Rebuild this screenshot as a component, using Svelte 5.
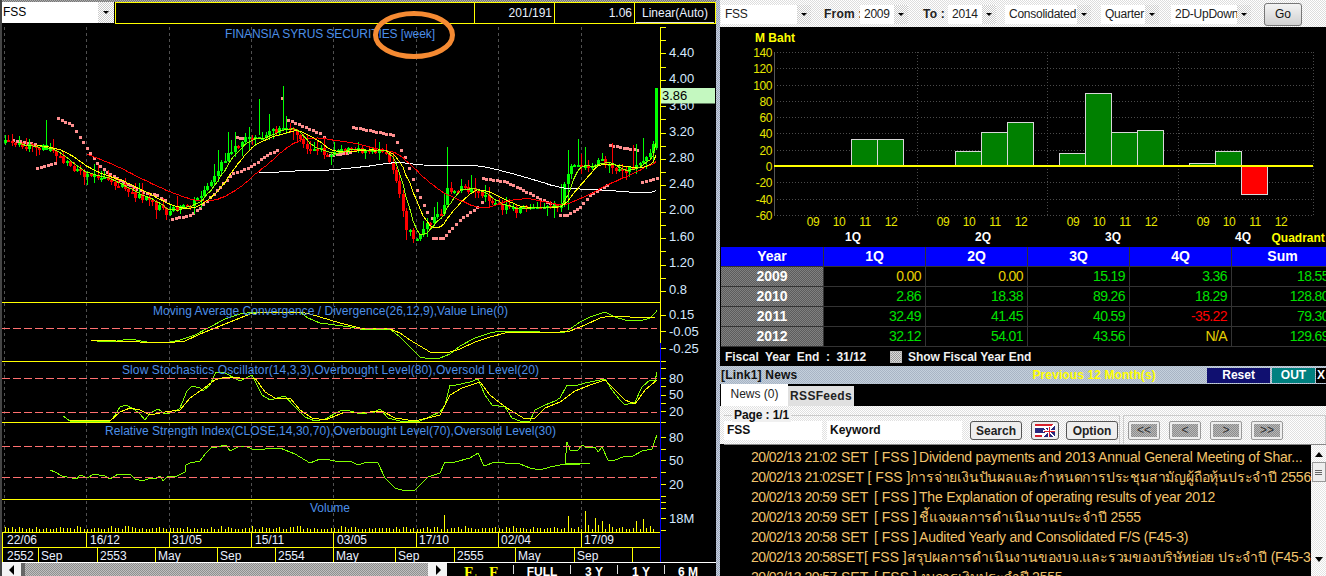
<script>
  const pts = (s) => s.trim().split(/\s+/).map((p) => p.split(',').map(Number));
  const str = (a) => a.map((p) => p.join(',')).join(' ');

  const path = pts(`5,143 30,147 50,148 60,160 80,172 100,178 125,188 145,200 165,212 180,207 190,205 200,195 210,180 225,158 232,150 245,140 265,135 283,128 295,133 310,150 330,153 360,150 385,152 392,165 400,200 405,225 412,237 420,235 430,222 440,215 448,190 460,188 478,190 490,200 510,210 530,208 560,205 565,180 572,165 585,165 600,160 610,165 625,175 640,160 650,152 654,145`);
  const at = (x) => {
    for (let i = 1; i < path.length; i++) {
      if (x <= path[i][0]) {
        const [a, b] = path[i - 1], [c, d] = path[i];
        return b + ((d - b) * (x - a)) / (c - a);
      }
    }
    return path[path.length - 1][1];
  };

  let seed = 4217;
  const rnd = () => ((seed = (seed * 16807) % 2147483647) / 2147483647);

  const STEP = 3.43;
  const candles = [];
  let prev = at(5);
  for (let i = 0; i < 190; i++) {
    const x = 5 + i * STEP;
    const close = at(x) + (rnd() - 0.5) * 7;
    const top = Math.min(prev, close), bot = Math.max(prev, close);
    const r = rnd(), q = rnd();
    const rising = x > 215 && x < 290 || x > 560;
    candles.push({
      x: Math.round(x), close,
      top, h: Math.max(bot - top, 2),
      hi: top - r * r * r * (rising ? 26 : 12) - 1,
      lo: bot + q * q * q * 9 + 1,
      up: close < prev
    });
    prev = close;
  }
  for (const [x, hi, lo, up] of [[45,120,146,1],[282,86,128,1],[258,99,135,1],[250,127,150,1],[270,114,140,1],[449,128,190,0],[448,147,198,1],[567,150,210,1]]) {
    const c = candles.reduce((m, k) => (Math.abs(k.x - x) < Math.abs(m.x - x) ? k : m));
    c.hi = hi; c.lo = lo; c.up = !!up;
  }
  candles.push({ x: 656, close: 100, top: 88, h: 60, hi: 88, lo: 150, up: true });

  const sma = (n) => {
    const out = [];
    for (let i = n - 1; i < candles.length; i++) {
      let s = 0;
      for (let j = i - n + 1; j <= i; j++) s += candles[j].close;
      out.push(`${candles[i].x},${(s / n).toFixed(1)}`);
    }
    return out.join(' ');
  };
  const ma5 = sma(5), ma10 = sma(10), ma25 = sma(25), ma75 = sma(75);

  const sarSegs = [
    '13,140 35,144',
    '37,168 55,163',
    '58,118 72,125 80,137 90,153 97,163 107,172 120,180 133,187 143,192 157,195 165,200',
    '172,219 190,215 200,208 217,190 233,173 248,168 267,155 277,150',
    '237,137 243,138',
    '288,120 320,133 324,137',
    '330,155 350,152',
    '353,127 393,135 405,157 417,190 427,212 432,218',
    '433,238 443,238 452,228 460,220 477,207 482,202',
    '483,178 507,182 523,190 547,202 557,205',
    '560,215 567,215 580,207 590,195 607,185',
    '610,145 637,150',
    '642,182 657,178'
  ];
  const sar = [];
  for (const s of sarSegs) {
    const p = pts(s);
    for (let k = 1; k < p.length; k++) {
      const [a, b] = p[k - 1], [c, d] = p[k];
      const n = Math.max(1, Math.round((c - a) / STEP));
      for (let j = 0; j < n; j++) sar.push([Math.round(a + ((c - a) * j) / n), Math.round(b + ((d - b) * j) / n)]);
    }
    sar.push(p[p.length - 1]);
  }
  sar.push([282, 98]);

  const macdG = '91,340 97,341 117,341 130,339 147,342 165,343 180,340 195,335 210,327 225,319 240,314 255,312 275,312 300,312 308,318 320,323 335,325 350,327 360,329 390,329 400,337 410,347 420,357 430,359 440,358 450,354 460,346 475,338 490,333 500,331 515,331 530,331 550,333 565,332 570,329 580,322 590,317 605,312 615,317 625,320 640,321 650,318 656,312 657,310';
  const macdY = '91,340 165,343 185,341 200,334 215,328 230,322 250,314 265,312 300,312 310,314 340,323 360,328 390,329 400,333 410,340 420,346 430,352 440,353 450,352 460,349 475,342 490,337 505,333 525,332 560,332 570,331 585,325 600,318 610,316 630,317 655,318';
  const stoG = '63,416 70,421 85,421 110,421 113,418 120,407 126,405 135,410 140,414 145,420 150,413 158,409 165,414 175,412 180,408 187,391 192,386 200,388 203,391 210,385 216,372 225,373 240,381 252,375 262,395 270,400 285,396 293,405 305,417 315,421 325,419 340,411 347,410 360,414 375,412 380,409 388,418 400,421 420,421 440,412 445,405 450,385 456,385 470,382 478,379 485,395 492,405 505,407 512,418 520,421 530,421 535,410 545,405 555,401 560,398 567,385 575,386 585,383 600,380 605,379 612,390 620,400 625,405 635,402 642,387 650,380 655,381 657,372';
  const stoY = '70,420 90,420 110,421 120,412 130,408 140,410 150,415 165,412 180,410 190,398 200,391 215,380 225,377 240,378 255,378 265,392 275,398 290,398 300,410 312,418 325,420 345,412 370,412 382,411 395,418 415,421 440,415 450,395 462,388 480,382 490,395 500,403 510,410 525,419 535,418 545,408 560,402 575,391 590,385 605,380 615,390 625,400 635,404 645,390 657,380';
  const rsi = '50,470 55,472 62,476 72,478 77,479 80,475 88,478 93,474 105,476 110,479 118,474 130,474 135,479 143,481 150,478 155,479 160,476 163,481 168,476 175,477 185,472 186,465 190,463 200,461 205,454 212,447 217,447 226,445 230,451 240,446 247,447 255,450 265,449 280,448 295,454 310,463 320,459 330,460 340,462 350,461 358,465 367,462 378,463 385,478 395,488 405,491 415,490 428,477 440,473 445,462 455,462 470,458 478,453 484,466 495,462 505,463 520,464 530,468 540,470 550,467 560,465 580,464 590,463 595,460 602,462 607,442 570,0'.replace(' 595,460 602,462 607,442 570,0', '') + ' 565,464 567,442 570,450 578,450 582,445 587,448 595,447 598,452 602,447 608,460 615,460 623,457 633,456 642,451 652,449 655,440 657,435';

  const bigVol = { 443: 515, 567: 516, 584: 511, 587: 525, 594: 518, 598: 525, 601: 521, 608: 524, 636: 521, 642: 519, 650: 526, 656: 502 };
  const volumes = Array.from({ length: 190 }, (_, i) => {
    const x = Math.round(5 + i * STEP);
    const k = Object.keys(bigVol).find((b) => Math.abs(b - x) < 2);
    return { x, y: k ? bigVol[k] : 531 - 2 - Math.round(rnd() * rnd() * 4) };
  });

  const verticals = [4, 86, 169, 251, 333, 416, 498, 581];
  const bandTops = [302, 361, 422, 499];
  const levels = [328, 378, 412, 446, 477];
  const axisTicks = [];
  for (let y = 27; y <= 302; y += 13.2) axisTicks.push(Math.round(y));
  axisTicks.push(315, 331, 348, 361, 368, 378, 386, 395, 403, 411, 422, 437, 449, 460, 472, 484, 496, 502, 508, 518, 530);
  const priceLabels = [['4.40',52],['4.00',78],['3.60',105],['3.20',131],['2.80',157],['2.40',183],['2.00',209],['1.60',236],['1.20',262],['0.8',289],['0.15',314],['-0.05',331],['-0.25',348],['80',378],['50',394],['20',411],['80',437],['50',460],['20',484],['18M',518]];
  const row1 = [['22/06',7],['16/12',90],['31/05',172],['15/11',255],['03/05',337],['17/10',419],['02/04',501],['17/09',584]];
  const row1Sep = [86, 169, 251, 333, 416, 498, 581];
  const row2 = [['2552',7],['Sep',41],['2553',100],['May',158],['Sep',220],['2554',278],['May',336],['Sep',398],['2555',457],['May',518],['Sep',577]];
  const row2Sep = [38, 97, 155, 217, 275, 333, 395, 454, 515, 574, 632];

  const V = (v) => 166 - v * 0.8143;
  const bars = [
    [851.4, 32.49],[877.5, 32.12],[955.3, 18.38],[981.4, 41.45],[1007.4, 54.01],
    [1059.6, 15.19],[1085.6, 89.26],[1111.7, 40.59],[1137.8, 43.56],
    [1189.5, 3.36],[1215.6, 18.29],[1241.7, -35.22]
  ];
  const yVals = [140,120,100,80,60,40,20,0,-20,-40,-60];
  const xGroups = [813, 943, 1073, 1203];
  const qLabels = [['1Q',853],['2Q',983],['3Q',1113],['4Q',1243]];

  const tableRows = [
    ['2009',['0.00','z'],['0.00','z'],['15.19','g'],['3.36','g'],['18.55','g']],
    ['2010',['2.86','g'],['18.38','g'],['89.26','g'],['18.29','g'],['128.80','g']],
    ['2011',['32.49','g'],['41.45','g'],['40.59','g'],['-35.22','r'],['79.30','g']],
    ['2012',['32.12','g'],['54.01','g'],['43.56','g'],['N/A','z'],['129.69','g']]
  ];
  const news = [
    ['20/02/13 21:02','Dividend payments and 2013 Annual General Meeting of Shar...'],
    ['20/02/13 21:02','การจ่ายเงินปันผลและกำหนดการประชุมสามัญผู้ถือหุ้นประจำปี 2556'],
    ['20/02/13 20:59','The Explanation of operating results of year 2012'],
    ['20/02/13 20:59','ชี้แจงผลการดำเนินงานประจำปี 2555'],
    ['20/02/13 20:58','Audited Yearly and Consolidated F/S (F45-3)'],
    ['20/02/13 20:58','สรุปผลการดำเนินงานของบจ.และรวมของบริษัทย่อย ประจำปี (F45-3)'],
    ['20/02/13 20:57','งบการเงินประจำปี 2555']
  ];
</script>

<div class="screen">
  <section class="left">
    <header class="topbar">
      <div class="symbol"><span class="symtext">FSS</span><span class="drop big"><i></i></span></div>
      <div class="infobox">
        <div class="info grow"></div>
        <div class="info num">201/191</div>
        <div class="info num">1.06</div>
        <div class="info scale"><span>Linear(Auto)</span></div>
      </div>
    </header>

    <svg class="chart" viewBox="0 24 716 539" width="716" height="539">
      <g stroke="#505050" stroke-dasharray="3 3" shape-rendering="crispEdges">
        {#each verticals as x}<line x1={x + .5} x2={x + .5} y1="27" y2="532" />{/each}
      </g>

      {#each sar as [x, y]}<rect x={x - 1} y={y - 1} width="3" height="3" fill="#ff8f8f" />{/each}

      <g shape-rendering="crispEdges">
        {#each candles as c}
          <line x1={c.x + .5} x2={c.x + .5} y1={c.hi} y2={c.lo} stroke={c.up ? '#00ff00' : '#ff0000'} />
          <rect x={c.x - 1} y={c.top} width="3" height={c.h} fill={c.up ? '#00ff00' : '#ff0000'} />
        {/each}
      </g>

      <g fill="none" shape-rendering="crispEdges">
        <polyline points={ma75} stroke="#ffffff" />
        <polyline points={ma25} stroke="#ff0000" />
        <polyline points={ma10} stroke="#ffff00" />
        <polyline points={ma5} stroke="#99ff00" />
        <polyline points={macdG} stroke="#80ff00" />
        <polyline points={macdY} stroke="#ffff00" />
        <polyline points={stoG} stroke="#80ff00" />
        <polyline points={stoY} stroke="#ffff00" />
        <polyline points={rsi} stroke="#80ff00" />
      </g>

      <g stroke="#ff7070" stroke-dasharray="8 3" shape-rendering="crispEdges">
        {#each levels as y}<line x1="2" x2="657" y1={y + .5} y2={y + .5} />{/each}
      </g>

      <g stroke="#ffff00" shape-rendering="crispEdges">
        {#each volumes as v}<line x1={v.x + .5} x2={v.x + .5} y1={v.y} y2="532" />{/each}
        {#each bandTops as y}<line x1="2" x2="660" y1={y + .5} y2={y + .5} />{/each}
        <line x1="2" x2="660" y1="532.5" y2="532.5" />
        <line x1="2" x2="660" y1="547.5" y2="547.5" />
        <line x1="2.5" x2="2.5" y1="532" y2="562" />
        {#each row1Sep as x}<line x1={x + .5} x2={x + .5} y1="532" y2="547" />{/each}
        {#each row2Sep as x}<line x1={x + .5} x2={x + .5} y1="547" y2="562" />{/each}
        {#each axisTicks as y}<line x1="661" x2="666" y1={y + .5} y2={y + .5} />{/each}
        <line x1="660.5" x2="660.5" y1="27" y2="343" />
      </g>
      <line x1="660.5" x2="660.5" y1="343" y2="562" stroke="#0000ff" stroke-width="1" shape-rendering="crispEdges" />
      <line x1="0" x2="716" y1="562.5" y2="562.5" stroke="#ffffff" shape-rendering="crispEdges" />

      <g class="ctitle">
        <text x="225" y="38" textLength="210">FINANSIA SYRUS SECURITIES [week]</text>
        <text x="153" y="315" textLength="355">Moving Average Convergence / Divergence(26,12,9),Value Line(0)</text>
        <text x="122" y="374" textLength="417">Slow Stochastics Oscillator(14,3,3),Overbought Level(80),Oversold Level(20)</text>
        <text x="105" y="435" textLength="451">Relative Strength Index(CLOSE,14,30,70),Overbought Level(70),Oversold Level(30)</text>
        <text x="310" y="512" textLength="40">Volume</text>
      </g>

      <g class="plabel">
        {#each priceLabels as [t, y]}<text x="669" y={y + 5}>{t}</text>{/each}
      </g>
      <rect x="661" y="88" width="54" height="15.5" fill="#c4f8c0" />
      <text x="662" y="100" class="tag">3.86</text>

      <g class="tlabel">
        {#each row1 as [t, x]}<text {x} y="544">{t}</text>{/each}
        {#each row2 as [t, x]}<text {x} y="560">{t}</text>{/each}
      </g>
    </svg>

    <footer class="scrollrow">
      <div class="sbtn"><svg width="8" height="10" viewBox="0 0 8 10"><path d="M6 0 1 5l5 5z" fill="#000"/></svg></div>
      <div class="thumb"></div>
      <div class="track"></div>
      <div class="sbtn"><svg width="8" height="10" viewBox="0 0 8 10"><path d="M2 0l5 5-5 5z" fill="#000"/></svg></div>
      <div class="tools">
        <span class="fb">F<sub>+</sub></span>
        <span class="fb">F<sub>-</sub></span>
        <span class="tool first">FULL</span>
        <span class="tool">3 Y</span>
        <span class="tool">1 Y</span>
        <span class="tool">6 M</span>
      </div>
    </footer>

    <svg class="ring" width="90" height="56" viewBox="0 0 90 56"><ellipse cx="45" cy="28" rx="38.5" ry="21.5" fill="none" stroke="#f58a32" stroke-width="5"/></svg>
  </section>

  <section class="right">
    <nav class="tb">
      <div class="sel w-sym"><span>FSS</span><span class="drop"><i></i></span></div>
      <b class="lab first">From :</b>
      <div class="sel w-year"><span>2009</span><span class="drop"><i></i></span></div>
      <b class="lab second">To :</b>
      <div class="sel w-year"><span>2014</span><span class="drop"><i></i></span></div>
      <div class="sel w-cons"><span>Consolidated</span><span class="drop"><i></i></span></div>
      <div class="sel w-quar"><span>Quarter</span><span class="drop"><i></i></span></div>
      <div class="sel w-2d"><span>2D-UpDown</span><span class="drop"><i></i></span></div>
      <button class="go">Go</button>
    </nav>

    <svg class="bars" viewBox="720 27 606 220" width="606" height="220">
      <text x="755" y="42" class="mbaht">M Baht</text>
      <g stroke="#4a4a4a" stroke-dasharray="1 2" shape-rendering="crispEdges">
        {#each yVals as v}<line x1="774" x2="1313" y1={Math.round(V(v)) + .5} y2={Math.round(V(v)) + .5} />{/each}
        {#each [774, 917.5, 1047.5, 1178, 1313] as x}<line x1={x} x2={x} y1="52" y2="216" />{/each}
      </g>
      <line x1="774.5" x2="774.5" y1="52" y2="216" stroke="#555" shape-rendering="crispEdges" />
      {#each yVals as v}<text x="772" y={V(v) + 5} class="yt" text-anchor="end">{v}</text>{/each}
      <g shape-rendering="crispEdges" stroke="#d8d8d8">
        {#each bars as [x, v]}
          <rect {x} y={v > 0 ? V(v) : 166} width="26" height={Math.abs(v) * 0.8143} fill={v > 0 ? '#008000' : '#ff0000'} />
        {/each}
      </g>
      <rect x="774" y="165" width="539" height="2" fill="#ffff00" />
      {#each xGroups as g}
        {#each ['09','10','11','12'] as t, i}<text x={g + i * 26} y="226" class="yt" text-anchor="middle">{t}</text>{/each}
      {/each}
      {#each qLabels as [t, x]}<text {x} y="241" class="q" text-anchor="middle">{t}</text>{/each}
      <text x="1271.5" y="242" class="quad">Quadrant</text>
    </svg>

    <div class="table">
      <div class="th">Year</div><div class="th">1Q</div><div class="th">2Q</div><div class="th">3Q</div><div class="th">4Q</div><div class="th">Sum</div>
      {#each tableRows as [y, ...cells]}
        <div class="yr">{y}</div>
        {#each cells as [t, c]}<div class="td {c}">{t}</div>{/each}
      {/each}
    </div>

    <div class="fiscal">
      <span class="fy">Fiscal&nbsp; Year&nbsp; End&nbsp; :&nbsp; 31/12</span>
      <span class="check"></span>
      <span class="show">Show Fiscal Year End</span>
    </div>

    <div class="newshead">
      <b class="link">[Link1] News</b>
      <b class="prev">Previous 12 Month(s)</b>
      <span class="hbtn reset">Reset</span>
      <span class="hbtn out">OUT</span>
      <span class="hbtn x">X</span>
    </div>

    <div class="tabs">
      <span class="tab on">News (0)</span>
      <span class="tab">RSSFeeds</span>
    </div>

    <div class="filters">
      <div class="group one">
        <span class="legend">Page : 1/1</span>
        <span class="inp w1">FSS</span>
        <span class="inp w2">Keyword</span>
        <button class="btn b1">Search</button>
        <button class="btn flag" aria-label="Language">
          <svg width="20" height="13" viewBox="0 0 20 13" shape-rendering="crispEdges">
            <rect width="20" height="13" fill="#d8202c"/><rect y="2" width="20" height="9" fill="#fff"/><rect y="4" width="20" height="5" fill="#28287c"/>
            <path d="M20 0v13H6z" fill="#28287c"/><path d="M20 0 7 13M8 3l12 10M14 3v10M8 7h12" stroke="#fff" stroke-width="1.5" fill="none"/><path d="M14 3v10M9 7h11" stroke="#d8202c" fill="none"/>
          </svg>
        </button>
        <button class="btn b2">Option</button>
      </div>
      <div class="group two">
        <button class="nav"><span>&lt;&lt;</span></button>
        <button class="nav"><span>&lt;</span></button>
        <button class="nav"><span>&gt;</span></button>
        <button class="nav"><span>&gt;&gt;</span></button>
      </div>
    </div>

    <div class="newslist">
      <div class="items">
        {#each news as [d, t]}
          <div class="item"><span class="d">{d}</span><span class="s">SET</span><span class="f">[ FSS ]</span><span class="t">{t}</span></div>
        {/each}
      </div>
      <div class="vscroll">
        <svg width="8" height="5" viewBox="0 0 8 5"><path d="M4 0l4 5H0z" fill="#000"/></svg>
        <div class="vthumb"><i></i><i></i><i></i></div>
        <svg class="dn" width="8" height="5" viewBox="0 0 8 5"><path d="M0 0h8L4 5z" fill="#000"/></svg>
      </div>
    </div>
  </section>
</div>

<style>
  :global(body) { margin: 0; background: #000; overflow: hidden; }
  .screen { position: relative; display: flex; width: 1326px; height: 576px; overflow: hidden; background: #000; font-family: "Liberation Sans", Arial, sans-serif; }
  .left { position: relative; flex: 0 0 716px; height: 576px; overflow: hidden; }
  .right { flex: 0 0 606px; margin-left: 4px; height: 576px; overflow: hidden; display: flex; flex-direction: column; position: relative; }
  .screen::before { content: ""; position: absolute; left: 716px; top: 0; width: 4px; height: 576px; background: conic-gradient(#c8d0e0 25%, #98a4b8 0 50%, #c8d0e0 0 75%, #98a4b8 0) 0 0 / 2px 2px; }
  .left::before { content: ""; position: absolute; left: 0; top: 0; width: 2px; height: 576px; background: #444; }

  .topbar { display: flex; height: 24px; padding-top: 2px; box-sizing: border-box; background: conic-gradient(#777 25%, #aaa 0 50%, #777 0 75%, #aaa 0) 0 0 / 2px 2px; background-size: 2px 2px; background-repeat: repeat-x; }
  .symbol { display: flex; flex: 0 0 113px; margin-left: 1px; height: 21px; background: #fff; }
  .symtext { flex: 1; font-size: 12px; color: #000; padding-left: 2px; line-height: 21px; }
  .infobox { display: flex; flex: 1; margin-left: 1px; height: 22px; box-sizing: border-box; border: 1px solid #ffff00; background: #000; }
  .info { color: #e8f0ff; font-size: 12px; line-height: 20px; box-sizing: border-box; border-right: 1px solid #ffff00; width: 80px; text-align: right; padding-right: 2px; }
  .info.grow { flex: 1; width: auto; }
  .info.scale { border-right: 0; text-align: center; padding: 0; }
  .info.scale span { display: block; height: 19px; border-bottom: 1px solid #ddd; margin: 0 1px; }

  .drop { display: flex; align-items: center; justify-content: center; flex: 0 0 14px; background: conic-gradient(#fff 25%, #ccc 0 50%, #fff 0 75%, #ccc 0) 0 0 / 2px 2px; }
  .drop.big { flex-basis: 16px; }
  .drop i { width: 0; height: 0; border: 3px solid transparent; border-top: 3px solid #000; border-bottom: 0; }

  .chart { display: block; }
  .ctitle text { fill: #4c8fe8; font-size: 12px; }
  .plabel text { fill: #d4e8ff; font-size: 13px; }
  .tlabel text { fill: #e8f0ff; font-size: 12px; }
  .tag { fill: #000; font-size: 13px; }

  .scrollrow { display: flex; height: 13px; align-items: stretch; }
  .sbtn { flex: 0 0 19px; margin-left: 2px; background: #f4f4f4; display: flex; align-items: center; justify-content: center; }
  .thumb { flex: 0 0 4px; background: #666; }
  .track { flex: 0 0 403px; background: conic-gradient(#c0c0c0 25%, #909090 0 50%, #c0c0c0 0 75%, #909090 0) 0 0 / 2px 2px; }
  .track + .sbtn { margin-left: 0; }
  .tools { flex: 1; display: flex; align-items: flex-start; position: relative; padding-left: 6px; color: #fff; font-size: 12px; font-weight: 700; line-height: 14px; padding-top: 2px; background: #000; white-space: nowrap; }
  .fb { color: #ffff00; font-family: "Liberation Serif", serif; font-size: 15px; margin-left: 11px; width: 14px; }
  .fb sub { font-size: 9px; vertical-align: -2px; }
  .fb + .fb { margin-left: 11px; }
  .tool { box-sizing: border-box; margin-left: 0; width: 47px; text-align: center; border-left: 1px solid #ddd; height: 9px; line-height: 15px; }
  .tool.first { margin-left: 10px; width: 57px; }
  .tool:nth-child(4) { width: 47px; }

  .ring { position: absolute; left: 369px; top: 7px; }

  .tb { flex: 0 0 27px; display: flex; align-items: center; box-sizing: border-box; padding-top: 1px; background: conic-gradient(#fff 25%, #ddd 0 50%, #fff 0 75%, #ddd 0) 0 0 / 2px 2px; font-size: 12px; color: #222; }
  .sel { display: flex; height: 19px; line-height: 19px; }
  .sel span:first-child { background: #fff; box-sizing: border-box; padding-left: 4px; overflow: hidden; white-space: nowrap; letter-spacing: -.25px; flex: 1; }
  .sel .drop { flex: 0 0 14px; }
  .w-sym { width: 90px; margin-left: 1px; }
  .w-year { width: 48px; }
  .w-cons { width: 86px; margin-left: 9px; }
  .w-quar { width: 58px; margin-left: 10px; }
  .w-2d { width: 80px; margin-left: 12px; }
  .lab { color: #222; font-size: 12px; white-space: nowrap; letter-spacing: .2px; }
  .lab.first { margin-left: 13px; width: 36px; }
  .lab.second { margin-left: 15px; width: 25px; }
  .go { margin: 0 0 0 13px; padding: 0; width: 38px; height: 23px; box-sizing: border-box; border: 1px solid #777; border-radius: 3px; background: linear-gradient(#f4f4f4, #d0d0d0); font: 12px "Liberation Sans", Arial, sans-serif; color: #111; }

  .bars { display: block; flex: 0 0 220px; }
  .mbaht { fill: #ffff00; font-size: 12px; font-weight: 700; }
  .yt { fill: #e6e600; font-size: 12px; letter-spacing: -.4px; }
  .q { fill: #fff; font-size: 12px; font-weight: 700; }
  .quad { fill: #ffff00; font-size: 12px; font-weight: 700; }

  .table { flex: 0 0 100px; margin-left: 1px; width: 612px; display: grid; grid-template-columns: 103px repeat(5, 102px); grid-auto-rows: 20px; background: #000; }
  .table > div { box-sizing: border-box; border-right: 1px solid #333; border-bottom: 1px solid #333; line-height: 19px; font-size: 14px; }
  .th { background: #0000ff; color: #fff; font-weight: 700; text-align: center; }
  .yr { color: #fff; font-weight: 700; text-align: center; background: conic-gradient(#5c5c5c 25%, #808080 0 50%, #5c5c5c 0 75%, #808080 0) 0 0 / 2px 2px; }
  .td { text-align: right; padding-right: 4px; letter-spacing: -.6px; }
  .td.g { color: #00e000; }
  .td.z { color: #e8d000; }
  .td.r { color: #ff0000; }

  .fiscal { flex: 0 0 19px; display: flex; align-items: center; color: #f0f0f0; font-size: 12px; background: #000; }
  .fy { margin-left: 5px; width: 165px; font-weight: 700; letter-spacing: -.05px; }
  .check { width: 12px; height: 12px; box-sizing: border-box; border: 1px solid #bbb; background: conic-gradient(#999 25%, #ddd 0 50%, #999 0 75%, #ddd 0) 0 0 / 2px 2px; }
  .show { margin-left: 6px; font-weight: 700; letter-spacing: -.02px; }

  .newshead { flex: 0 0 18px; display: flex; align-items: center; box-sizing: border-box; background: conic-gradient(#c4d0dc 25%, #a8b4c4 0 50%, #c4d0dc 0 75%, #a8b4c4 0) 0 0 / 2px 2px; font-size: 12px; }
  .link { margin-left: 1px; width: 312px; color: #111; letter-spacing: .2px; }
  .prev { color: #ffff00; width: 175px; letter-spacing: .1px; }
  .hbtn { height: 15px; line-height: 15px; text-align: center; font-weight: 700; color: #fff; }
  .reset { width: 63px; background: #101070; }
  .out { width: 43px; margin-left: 2px; background: #008080; }
  .x { width: 9px; margin-left: 1px; background: #000; text-align: left; padding-left: 1px; }

  .tabs { flex: 0 0 22px; display: flex; align-items: flex-end; background: #000; font-size: 12px; }
  .tab { box-sizing: border-box; width: 66px; height: 20px; line-height: 20px; text-align: center; background: #e0e0e0; color: #222; font-weight: 700; letter-spacing: .3px; }
  .tab.on { width: 67px; height: 22px; margin-left: 1px; background: #fff; font-weight: 400; letter-spacing: 0; line-height: 21px; }

  .filters { flex: 0 0 38px; display: flex; align-items: flex-start; box-sizing: border-box; padding: 9px 0 0 4px; background: conic-gradient(#fff 25%, #e0e0e0 0 50%, #fff 0 75%, #e0e0e0 0) 0 0 / 2px 2px; }
  .group { display: flex; box-sizing: border-box; height: 29px; position: relative; align-items: flex-start; padding-top: 6px; border: 1px solid #ccc; border-bottom: 0; }
  .group.one { width: 402px; gap: 0; border-left: 0; padding-top: 5px; }
  .group.two { width: 206px; margin-left: 3px; padding-left: 4px; padding-top: 5px; gap: 9px; }
  .legend { position: absolute; left: 8px; top: -7px; padding: 0 2px; font-size: 12px; color: #111; background: #f0f0f0; line-height: 13px; font-weight: 700; letter-spacing: -.1px; }
  .inp { display: block; box-sizing: border-box; height: 19px; line-height: 19px; background: #fff; font-size: 12px; font-weight: 700; color: #111; padding-left: 3px; }
  .w1 { width: 98px; }
  .w2 { width: 135px; margin-left: 5px; padding-left: 3px; }
  .btn { box-sizing: border-box; height: 19px; margin: 0; padding: 0; border: 1px solid #555; border-radius: 3px; background: #eee; font: 700 12px "Liberation Sans", Arial, sans-serif; color: #222; }
  .b1 { width: 52px; margin-left: 8px; }
  .flag { width: 28px; margin-left: 9px; display: flex; align-items: center; justify-content: center; }
  .b2 { width: 52px; margin-left: 7px; }
  .nav { box-sizing: border-box; width: 32px; height: 19px; margin: 0; padding: 2px; border: 1px solid #999; border-radius: 2px; background: #eee; font: 12px "Liberation Sans", Arial, sans-serif; color: #333; }
  .nav span { display: block; height: 13px; line-height: 13px; background: conic-gradient(#8c8c8c 25%, #b8b8b8 0 50%, #8c8c8c 0 75%, #b8b8b8 0) 0 0 / 2px 2px; }

  .newslist { flex: 1; display: flex; margin-left: 4px; min-height: 0; border-top: 1px solid #888; }
  .items { flex: 1; background: #000; overflow: hidden; padding-top: 2px; }
  .item { display: flex; height: 20px; line-height: 20px; font-size: 14px; color: #f2c46c; white-space: nowrap; font-family: "Liberation Sans", "Noto Sans", sans-serif; }
  .d { margin-left: 27px; width: 90px; letter-spacing: -.55px; }
  .s { width: 33px; }
  .f { width: 45px; }
  .t { letter-spacing: -.2px; }
  .vscroll { flex: 0 0 15px; display: flex; flex-direction: column; align-items: center; background: conic-gradient(#fff 25%, #e4e4e4 0 50%, #fff 0 75%, #e4e4e4 0) 0 0 / 2px 2px; padding-top: 7px; box-sizing: border-box; }
  .vthumb { width: 14px; height: 20px; margin-top: 5px; box-sizing: border-box; border: 1px solid #999; background: #eee; display: flex; flex-direction: column; align-items: center; justify-content: center; gap: 1px; }
  .vthumb i { display: block; width: 7px; height: 1px; background: #666; }
  .dn { margin-top: 75px; }
</style>
